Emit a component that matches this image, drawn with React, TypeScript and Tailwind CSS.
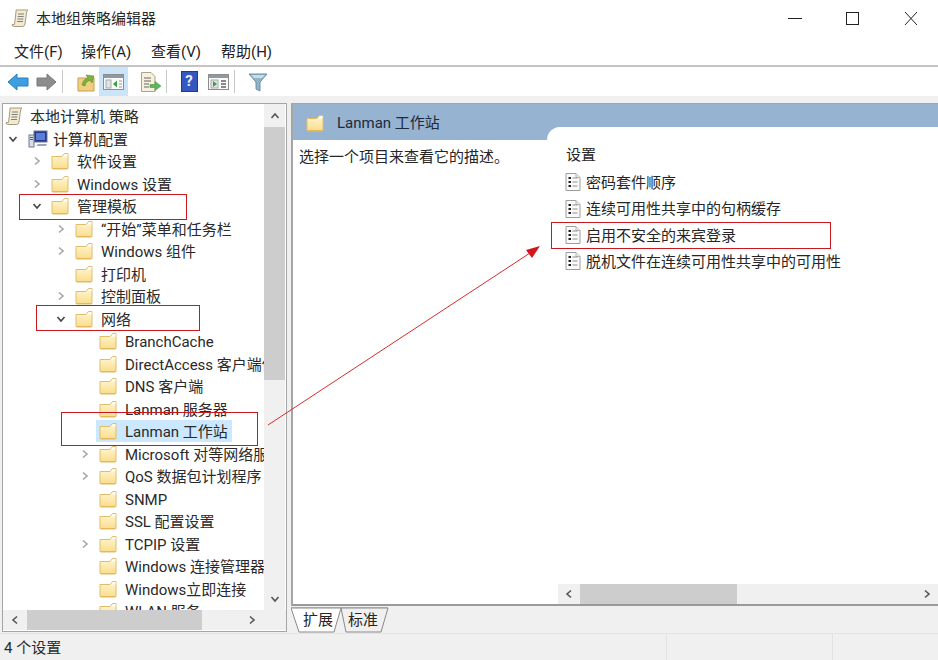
import React from "react";

const Folder = () => (
  <svg width="18" height="18" viewBox="0 0 18 18" className="shrink-0">
    <defs>
      <linearGradient id="fg" x1="0" y1="0" x2="0" y2="1">
        <stop offset="0" stopColor="#fff6d2" />
        <stop offset="1" stopColor="#f9dd8c" />
      </linearGradient>
    </defs>
    <path d="M1 4.5 L1 16 Q1 17 2 17 L16 17 Q17 17 17 16 L17 1.5 L13.5 1.5 L11 4.5 Z" fill="url(#fg)" stroke="#dfbd6c" strokeWidth="1" />
    <path d="M12 4.5 L14.5 2 L16.5 2 L16.5 4.5 Z" fill="#fff" opacity=".9" />
    <path d="M1.5 16.5 L16.5 16.5" stroke="#e3b95c" strokeWidth="1" />
  </svg>
);

const Scroll = () => (
  <svg width="20" height="20" viewBox="0 0 20 20" className="shrink-0">
    <path d="M5 2 L17 2 Q15.5 3 15.5 5 L14 16 Q13.5 18.5 11.5 18.5 L2.5 18.5 Q1 18.5 1.2 16.5 L3.5 16.5 L5 4 Q5 2 5 2 Z" fill="#f3ead3" stroke="#a79a7c" strokeWidth="1" />
    <path d="M7 6 H13 M6.7 8.5 H12.7 M6.4 11 H12.4 M6.1 13.5 H12" stroke="#7f7f7f" strokeWidth="1" />
  </svg>
);

const Computer = () => (
  <svg width="20" height="18" viewBox="0 0 20 18" className="shrink-0">
    <rect x="6" y="1" width="13" height="11" fill="#25378f" stroke="#6b7894" />
    <rect x="8" y="3" width="9" height="7" fill="#5a7fd8" />
    <rect x="1" y="5" width="5" height="12" fill="#d7dde8" stroke="#6c7a90" />
    <path d="M2 7.5 H5 M2 9.5 H5" stroke="#3f5fa8" />
    <path d="M8 16 H18 L19 14 H10 Z" fill="#9aa6b8" />
  </svg>
);

const Setting = () => (
  <svg width="16" height="18" viewBox="0 0 16 18" className="shrink-0">
    <path d="M1 0.5 H11 L15 4.5 V17.5 H1 Z" fill="#fafafa" stroke="#9d9d9d" />
    <path d="M11 .5 V4.5 H15" fill="#e9e9e9" stroke="#b5b5b5" />
    <path d="M3.5 5 H6 M3.5 9 H6 M3.5 13 H6" stroke="#222" strokeWidth="2" />
    <path d="M7.5 5 H12.5 M7.5 9 H12.5 M7.5 13 H12.5" stroke="#8f8f8f" />
  </svg>
);

const Chev = ({ dir, color = "#a6a6a6", w = 1.6 }: { dir: "r" | "d" | "l" | "u"; color?: string; w?: number }) => {
  const d = { r: "M3 1.5 L7 5 L3 8.5", l: "M7 1.5 L3 5 L7 8.5", d: "M1.5 3 L5 7 L8.5 3", u: "M1.5 7 L5 3 L8.5 7" }[dir];
  return (
    <svg width="10" height="10" viewBox="0 0 10 10" className="shrink-0">
      <path d={d} fill="none" stroke={color} strokeWidth={w} />
    </svg>
  );
};

type Row = { t: string; l: number; c?: "r" | "d"; sel?: boolean; icon?: "s" | "c" };
const rows: Row[] = [
  { t: "本地计算机 策略", l: 0, icon: "s" },
  { t: "计算机配置", l: 1, c: "d", icon: "c" },
  { t: "软件设置", l: 2, c: "r" },
  { t: "Windows 设置", l: 2, c: "r" },
  { t: "管理模板", l: 2, c: "d" },
  { t: "“开始”菜单和任务栏", l: 3, c: "r" },
  { t: "Windows 组件", l: 3, c: "r" },
  { t: "打印机", l: 3 },
  { t: "控制面板", l: 3, c: "r" },
  { t: "网络", l: 3, c: "d" },
  { t: "BranchCache", l: 4 },
  { t: "DirectAccess 客户端体验设置", l: 4 },
  { t: "DNS 客户端", l: 4 },
  { t: "Lanman 服务器", l: 4 },
  { t: "Lanman 工作站", l: 4, sel: true },
  { t: "Microsoft 对等网络服务", l: 4, c: "r" },
  { t: "QoS 数据包计划程序", l: 4, c: "r" },
  { t: "SNMP", l: 4 },
  { t: "SSL 配置设置", l: 4 },
  { t: "TCPIP 设置", l: 4, c: "r" },
  { t: "Windows 连接管理器", l: 4 },
  { t: "Windows立即连接", l: 4 },
  { t: "WLAN 服务", l: 4 },
];

const colCls: Record<number, string> = {
  0: "w-[2px] pl-0",
  1: "w-[25px] pl-[5px]",
  2: "w-[48px] pl-[29px]",
  3: "w-[72px] pl-[53px]",
  4: "w-[96px] pl-[77px]",
};

const TreeRow = ({ r }: { r: Row }) => (
  <div className="flex h-[22.5px] items-center whitespace-nowrap">
    <div className={`${colCls[r.l]} flex shrink-0 items-center`}>
      {r.c ? <Chev dir={r.c === "d" ? "d" : "r"} color={r.c === "d" ? "#444" : "#a6a6a6"} /> : null}
    </div>
    <div className={r.sel ? "-ml-[3px] flex h-[22px] items-center bg-[#cce8ff] pl-[3px] pr-[4px]" : "flex items-center"}>
      <div className={r.l < 2 ? "w-[25px] shrink-0" : "w-[26px] shrink-0"}>
        {r.icon === "s" ? <Scroll /> : r.icon === "c" ? <Computer /> : <Folder />}
      </div>
      <span className="pt-[2px] leading-[20px]">{r.t}</span>
    </div>
  </div>
);

const TB = ({ children, w, active }: { children: React.ReactNode; w: string; active?: boolean }) => (
  <div className={`${w} flex h-[29px] shrink-0 items-center justify-center ${active ? "bg-[#cce4f7]" : ""}`}>{children}</div>
);
const Sep = () => <div className="h-[23px] w-px shrink-0 bg-[#c8c8c8]" />;

export default function App() {
  return (
    <div
      className="relative flex h-[660px] w-[938px] flex-col overflow-hidden bg-[#f0f0f0] text-[15px] text-[#262626]"
      style={{ fontFamily: 'Roboto, "Noto Sans CJK SC", sans-serif' }}
    >
      {/* title bar */}
      <div className="flex h-[38px] shrink-0 items-center bg-white pb-[2px] pl-[11px]">
        <Scroll />
        <span className="ml-[5px] pt-[2px]">本地组策略编辑器</span>
        <div className="ml-auto flex items-center">
          <svg width="130" height="16" viewBox="0 0 130 16" className="mr-[20px]">
            <path d="M0 8.5 H14" stroke="#222" />
            <rect x="58.5" y="2.5" width="12" height="12" fill="none" stroke="#222" />
            <path d="M117 2 L129 15 M129 2 L117 15" stroke="#222" />
          </svg>
        </div>
      </div>
      {/* menu */}
      <div className="flex h-[29px] shrink-0 items-center border-b-2 border-[#c4c4c4] bg-white pl-[14px] pt-[2px] text-[#222]">
        <span className="w-[67px]">文件(F)</span>
        <span className="w-[70px]">操作(A)</span>
        <span className="w-[70px]">查看(V)</span>
        <span>帮助(H)</span>
      </div>
      {/* toolbar */}
      <div className="flex h-[29px] shrink-0 items-center bg-white pl-[6px]">
        <TB w="w-[23px]">
          <svg width="22" height="20" viewBox="0 0 22 20"><path d="M1 10 L10 2 V6 H21 V14 H10 V18 Z" fill="#3d9fe0" stroke="#2b7fc0" /></svg>
        </TB>
        <div className="w-[6px]" />
        <TB w="w-[22px]">
          <svg width="21" height="20" viewBox="0 0 21 20"><path d="M20 10 L11 2 V6 H1 V14 H11 V18 Z" fill="#8c8c8c" stroke="#7a7a7a" /></svg>
        </TB>
        <div className="w-[5px]" />
        <Sep />
        <div className="w-[12px]" />
        <TB w="w-[21px]">
          <svg width="20" height="20" viewBox="0 0 20 20">
            <path d="M2 6 H18 V19 H2 Z" fill="#f1cf7e" stroke="#c79f4f" />
            <path d="M6 13 Q7 7 12 6 L10 3 L18 4 L16 11 L14 8.5 Q10 9 9 14 Z" fill="#7fb03f" stroke="#5f8f2f" strokeWidth=".6" />
          </svg>
        </TB>
        <div className="w-[3px]" />
        <TB w="w-[29px]" active>
          <svg width="21" height="18" viewBox="0 0 21 18">
            <rect x=".5" y="1.5" width="20" height="15" fill="#fafafa" stroke="#8d8d8d" />
            <rect x="1" y="2" width="19" height="3" fill="#8d99a6" />
            <rect x="3" y="7" width="5" height="8" fill="#dfe4ea" stroke="#aaa" />
            <path d="M14 7.5 L10 11 L14 14.5 Z" fill="#3f9f3f" />
            <path d="M16 8 H19 M16 11 H19 M16 14 H19" stroke="#9a9a9a" />
          </svg>
        </TB>
        <div className="w-[12px]" />
        <TB w="w-[22px]">
          <svg width="22" height="20" viewBox="0 0 22 20">
            <path d="M1.5 .5 H11 L15 4.5 V19.5 H1.5 Z" fill="#f6f0dc" stroke="#a9a28c" />
            <path d="M4 6 H11 M4 9 H11 M4 12 H9 M4 15 H9" stroke="#666" />
            <path d="M10 12.5 H15 V9.5 L21 14 L15 18.5 V15.5 H10 Z" fill="#5cb85c" stroke="#3f9a3f" strokeWidth=".6" />
          </svg>
        </TB>
        <div className="w-[4px]" />
        <Sep />
        <div className="w-[13px]" />
        <TB w="w-[18px]">
          <div className="flex h-[21px] w-[17px] items-center justify-center border border-[#1f3a93] bg-[#3558c0] text-[15px] font-bold leading-none text-[#e8eeff]">?</div>
        </TB>
        <div className="w-[9px]" />
        <TB w="w-[22px]">
          <svg width="21" height="18" viewBox="0 0 21 18">
            <rect x=".5" y="1.5" width="20" height="15" fill="#fafafa" stroke="#8d8d8d" />
            <rect x="1" y="2" width="19" height="3" fill="#8d99a6" />
            <rect x="3" y="7" width="7" height="8" fill="#dfe4ea" stroke="#aaa" />
            <path d="M5 8 L9 11 L5 14 Z" fill="#3f9f3f" />
            <path d="M13 8 H18 M13 11 H18 M13 14 H18" stroke="#666" strokeWidth="1.5" />
          </svg>
        </TB>
        <div className="w-[5px]" />
        <Sep />
        <div className="w-[12px]" />
        <TB w="w-[21px]">
          <svg width="20" height="20" viewBox="0 0 20 20">
            <path d="M1 2 H19 L12 10 V19 L8 17 V10 Z" fill="#8fb4c8" stroke="#6a8ea3" />
            <path d="M3 3 H17 L14 6 H6 Z" fill="#c8dde8" />
          </svg>
        </TB>
      </div>
      {/* main */}
      <div className="flex min-h-0 flex-1 pl-[2px] pt-[7px]">
        {/* tree */}
        <div className="flex h-[529px] w-[285px] shrink-0 flex-col border border-[#a5a5a5] bg-white">
          <div className="flex min-h-0 flex-1">
            <div className="min-w-0 flex-1 overflow-hidden pt-[1px] text-[#2a2a2a]">
              {rows.map((r, i) => (
                <TreeRow key={i} r={r} />
              ))}
            </div>
            <div className="mr-[1px] flex w-[21px] shrink-0 flex-col bg-[#f0f0f0]">
              <div className="flex h-[23px] shrink-0 items-center justify-center"><Chev dir="u" color="#555" /></div>
              <div className="h-[253px] shrink-0 bg-[#cdcdcd]" />
              <div className="flex-1" />
              <div className="flex h-[22px] shrink-0 items-center justify-center"><Chev dir="d" color="#555" /></div>
            </div>
          </div>
          <div className="mb-[1px] flex h-[20px] shrink-0 bg-[#f0f0f0]">
            <div className="flex w-[24px] shrink-0 items-center justify-center"><Chev dir="l" color="#555" /></div>
            <div className="w-[175px] shrink-0 bg-[#cdcdcd]" />
            <div className="w-[40px] shrink-0" />
            <div className="flex w-[20px] shrink-0 items-center justify-center"><Chev dir="r" color="#555" /></div>
          </div>
        </div>
        {/* right panel */}
        <div className="ml-[4px] flex min-w-0 flex-1 flex-col">
          <div className="flex h-[503px] shrink-0 flex-col border-b-2 border-l-2 border-t border-[#a5a5a5] border-b-[#9a9a9a] bg-white">
            <div className="flex h-[36px] shrink-0 items-end bg-[#97b3d2]">
              <div className="flex h-[36px] items-center pl-[13px] pt-[1px]">
                <Folder />
                <span className="ml-[13px] pt-[2px] text-[#1c2a3a]">Lanman 工作站</span>
              </div>
              <div className="ml-auto h-[13px] w-[391px] rounded-tl-[14px] bg-white" />
            </div>
            <div className="flex min-h-0 flex-1">
              <div className="w-[265px] shrink-0 pl-[6px] pt-[6px] leading-[22px]">选择一个项目来查看它的描述。</div>
              <div className="flex min-w-0 flex-1 flex-col">
                <div className="min-h-0 flex-1">
                  <div className="pl-[8px] pt-[4px] leading-[22px]">设置</div>
                  <div className="pt-[3px]">
                    {["密码套件顺序", "连续可用性共享中的句柄缓存", "启用不安全的来宾登录", "脱机文件在连续可用性共享中的可用性"].map((t) => (
                      <div key={t} className="flex h-[26.4px] items-center pl-[7px]">
                        <Setting />
                        <span className="ml-[5px] whitespace-nowrap pt-[2px]">{t}</span>
                      </div>
                    ))}
                  </div>
                </div>
                <div className="flex h-[20px] shrink-0 bg-[#f0f0f0]">
                  <div className="flex w-[22px] shrink-0 items-center justify-center"><Chev dir="l" color="#555" /></div>
                  <div className="w-[157px] shrink-0 bg-[#cdcdcd]" />
                  <div className="flex-1" />
                  <div className="flex w-[22px] shrink-0 items-center justify-center"><Chev dir="r" color="#555" /></div>
                </div>
              </div>
            </div>
          </div>
          {/* tabs */}
          <div className="mt-[1px] h-[26px] shrink-0">
            <div className="relative flex h-[26px] w-[100px] items-center">
              <svg width="100" height="26" viewBox="0 0 100 26" className="absolute left-0 top-0">
                <path d="M0 1 H97" stroke="#9a9a9a" fill="none" />
                <path d="M50 1 L55 25 H90 L97 1 Z" fill="#f0f0f0" stroke="#8a8a8a" />
                <path d="M0 1 L8 25 H43 L50 1 Z" fill="#fff" stroke="#8a8a8a" />
              </svg>
              <span className="relative ml-[12px] w-[45px]">扩展</span>
              <span className="relative">标准</span>
            </div>
          </div>
        </div>
      </div>
      {/* status */}
      <div className="flex h-[27px] shrink-0 items-center border-t border-[#e3e3e3] pl-[4px] text-[#2a2a2a]">
        <span className="w-[662px] pt-[3px]">4 个设置</span>
        <div className="h-full w-px bg-[#e3e3e3]" />
        <div className="w-[165px]" />
        <div className="h-full w-px bg-[#e3e3e3]" />
      </div>
      {/* annotations */}
      <div className="absolute left-[19px] top-[194px] h-[26px] w-[168px] border border-[#c8171e]" />
      <div className="absolute left-[36px] top-[305px] h-[26px] w-[164px] border border-[#c8171e]" />
      <div className="absolute left-[61px] top-[412px] h-[34px] w-[197px] border border-[#c8171e]" />
      <div className="absolute left-[551px] top-[222px] h-[27px] w-[280px] border border-[#c8171e]" />
      <svg width="938" height="660" className="pointer-events-none absolute left-0 top-0">
        <path d="M268 425 L530 253" stroke="#d92b2b" strokeWidth="1" fill="none" />
        <path d="M540 246 L526 250 L532 258 Z" fill="#d4141c" />
      </svg>
    </div>
  );
}
